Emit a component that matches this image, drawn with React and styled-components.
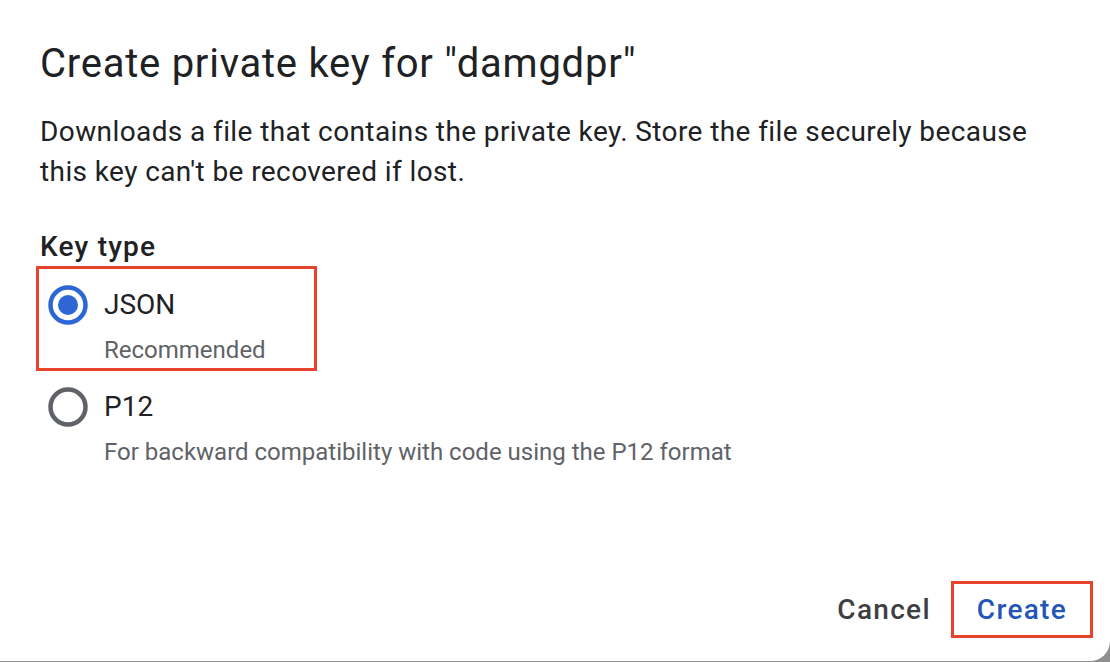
import styled, { createGlobalStyle } from "styled-components";

const GlobalStyle = createGlobalStyle`
  html, body {
    margin: 0;
    padding: 0;
    background: #8f8f8f;
  }
  body {
    font-family: Roboto, "Liberation Sans", sans-serif;
  }
`;

const options = [
  { id: "json", label: "JSON", hint: "Recommended", checked: true, marked: true },
  {
    id: "p12",
    label: "P12",
    hint: "For backward compatibility with code using the P12 format",
  },
];

const Radio = ({ checked }) => (
  <RadioIcon viewBox="0 0 40 40" $checked={checked}>
    <circle cx="20" cy="20" r="17.5" fill="none" strokeWidth="4.5" />
    {checked && <circle cx="20" cy="20" r="10" className="dot" />}
  </RadioIcon>
);

const App = () => {
  return (
    <>
      <GlobalStyle />
      <Dialog>
        <Title>Create private key for "damgdpr"</Title>
        <Text>
          Downloads a file that contains the private key. Store the file
          securely because this key can't be recovered if lost.
        </Text>
        <GroupLabel>Key type</GroupLabel>
        <Options>
          {options.map(({ id, label, hint, checked, marked }) => (
            <Option key={id} $marked={marked}>
              <Radio checked={checked} />
              <OptionLabel>{label}</OptionLabel>
              <OptionHint>{hint}</OptionHint>
            </Option>
          ))}
        </Options>
        <Actions>
          <Button>Cancel</Button>
          <Button $primary $marked>
            Create
          </Button>
        </Actions>
      </Dialog>
    </>
  );
};

export default App;

const Dialog = styled.div`
  display: flex;
  flex-direction: column;
  box-sizing: border-box;
  width: 1110px;
  height: 661px;
  padding: 40px 40px 26px;
  background: #fff;
  border-bottom-right-radius: 20px;
  color: #202124;
`;

const Title = styled.h1`
  margin: 0;
  font-size: 40px;
  line-height: 48px;
  font-weight: 400;
  letter-spacing: 0.75px;
`;

const Text = styled.p`
  margin: 24px 0 0;
  max-width: 1010px;
  font-size: 28px;
  line-height: 40px;
  letter-spacing: 0.4px;
  color: #202124;
`;

const GroupLabel = styled.div`
  margin-top: 35px;
  font-size: 28px;
  line-height: 40px;
  font-weight: 500;
  letter-spacing: 1.2px;
`;

const Options = styled.div`
  display: flex;
  flex-direction: column;
  align-items: flex-start;
  gap: 3px;
  margin: 2px 0 0 -1px;
`;

const Option = styled.div`
  display: grid;
  grid-template-columns: 40px auto;
  column-gap: 16px;
  row-gap: 9px;
  align-items: center;
  padding: 16px ${({ $marked }) => ($marked ? "48px" : "0")} 2px 9px;
  outline: ${({ $marked }) => ($marked ? "3px solid #e8432d" : "none")};
`;

const RadioIcon = styled.svg`
  width: 40px;
  height: 40px;
  display: block;

  circle {
    stroke: ${({ $checked }) => ($checked ? "#2f66d6" : "#5f6368")};
  }

  .dot {
    fill: #2f66d6;
    stroke: none;
  }
`;

const OptionLabel = styled.span`
  font-size: 28px;
  line-height: 40px;
  color: #202124;
`;

const OptionHint = styled.span`
  grid-column: 2;
  font-size: 24px;
  line-height: 32px;
  color: #5f6368;
`;

const Actions = styled.div`
  display: flex;
  justify-content: flex-end;
  margin-top: auto;
  margin-right: -20px;
`;

const Button = styled.button`
  height: 51px;
  padding: 0 23px;
  border: none;
  background: none;
  font-family: inherit;
  font-size: 28px;
  font-weight: 500;
  letter-spacing: 1.3px;
  color: ${({ $primary }) => ($primary ? "#2456b8" : "#3c4043")};
  outline: ${({ $marked }) => ($marked ? "3px solid #e8432d" : "none")};
  cursor: pointer;
`;
